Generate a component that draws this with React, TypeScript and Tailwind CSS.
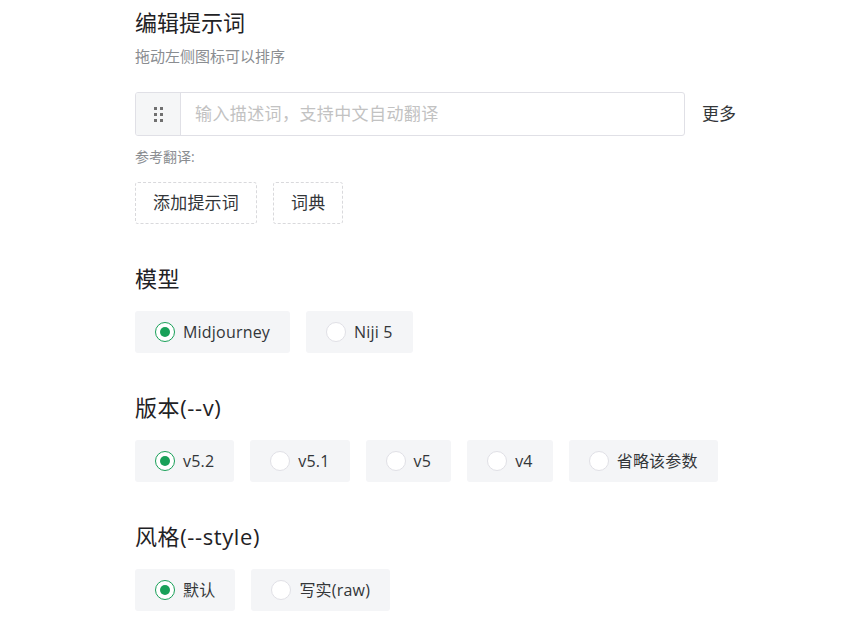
import { useState } from "react";

const font = { fontFamily: '"Open Sans", "Noto Sans CJK SC", sans-serif' };

function Radio({ checked }: { checked: boolean }) {
  return (
    <span
      className={`flex h-5 w-5 shrink-0 items-center justify-center rounded-full border bg-white ${
        checked ? "border-[#18a058]" : "border-[#e0e0e6]"
      }`}
    >
      {checked && <span className="h-[10px] w-[10px] rounded-full bg-[#18a058]" />}
    </span>
  );
}

function OptionGroup({ title, options, mt }: { title: string; options: string[]; mt: string }) {
  const [value, setValue] = useState(options[0]);
  return (
    <section className={mt}>
      <h3 className="text-[22px] leading-[30px] tracking-[0.6px] text-[#1f2225]">{title}</h3>
      <div className="mt-[18px] flex gap-4">
        {options.map((o) => (
          <button
            key={o}
            onClick={() => setValue(o)}
            className="flex h-[42px] items-center gap-2 rounded-[3px] bg-[#f4f5f7] px-5 text-[16px] tracking-[0.2px] text-[#333639]"
          >
            <Radio checked={value === o} />
            <span>{o}</span>
          </button>
        ))}
      </div>
    </section>
  );
}

function DragDots() {
  return (
    <div className="grid grid-cols-2 gap-x-[3px] gap-y-[3px]">
      {Array.from({ length: 6 }).map((_, i) => (
        <span key={i} className="h-[3px] w-[3px] bg-[#707070]" />
      ))}
    </div>
  );
}

export default function App() {
  return (
    <div className="min-h-[626px] bg-white pl-[135px] pt-[6px]" style={font}>
      <h2 className="text-[22px] leading-[32px] text-[#1f2225]">编辑提示词</h2>
      <p className="mt-[8px] text-[15px] leading-[20px] text-[#8a8d91]">拖动左侧图标可以排序</p>

      <div className="mt-[26px] flex items-center">
        <div className="flex h-[44px] w-[550px] overflow-hidden rounded-[3px] border border-[#e0e0e6]">
          <div className="flex w-[45px] items-center justify-center border-r border-[#e0e0e6] bg-[#f5f6f7]">
            <DragDots />
          </div>
          <input
            className="flex-1 px-[14px] text-[17px] tracking-[0.4px] text-[#333] outline-none placeholder:text-[#c2c2c2]"
            placeholder="输入描述词，支持中文自动翻译"
          />
        </div>
        <span className="ml-[17px] text-[17px] text-[#333639]">更多</span>
      </div>

      <p className="mt-[11px] text-[14px] leading-[20px] text-[#8a8d91]">参考翻译:</p>
      <div className="mt-[15px] flex gap-4">
        <button className="h-[42px] rounded-[3px] border border-dashed border-[#d9d9dc] px-[17px] text-[17px] tracking-[0.2px] text-[#333639]">
          添加提示词
        </button>
        <button className="h-[42px] rounded-[3px] border border-dashed border-[#d9d9dc] px-[17px] text-[17px] tracking-[0.2px] text-[#333639]">
          词典
        </button>
      </div>

      <OptionGroup mt="mt-[39px]" title="模型" options={["Midjourney", "Niji 5"]} />
      <OptionGroup mt="mt-[39px]" title="版本(--v)" options={["v5.2", "v5.1", "v5", "v4", "省略该参数"]} />
      <OptionGroup mt="mt-[39px]" title="风格(--style)" options={["默认", "写实(raw)"]} />
    </div>
  );
}
